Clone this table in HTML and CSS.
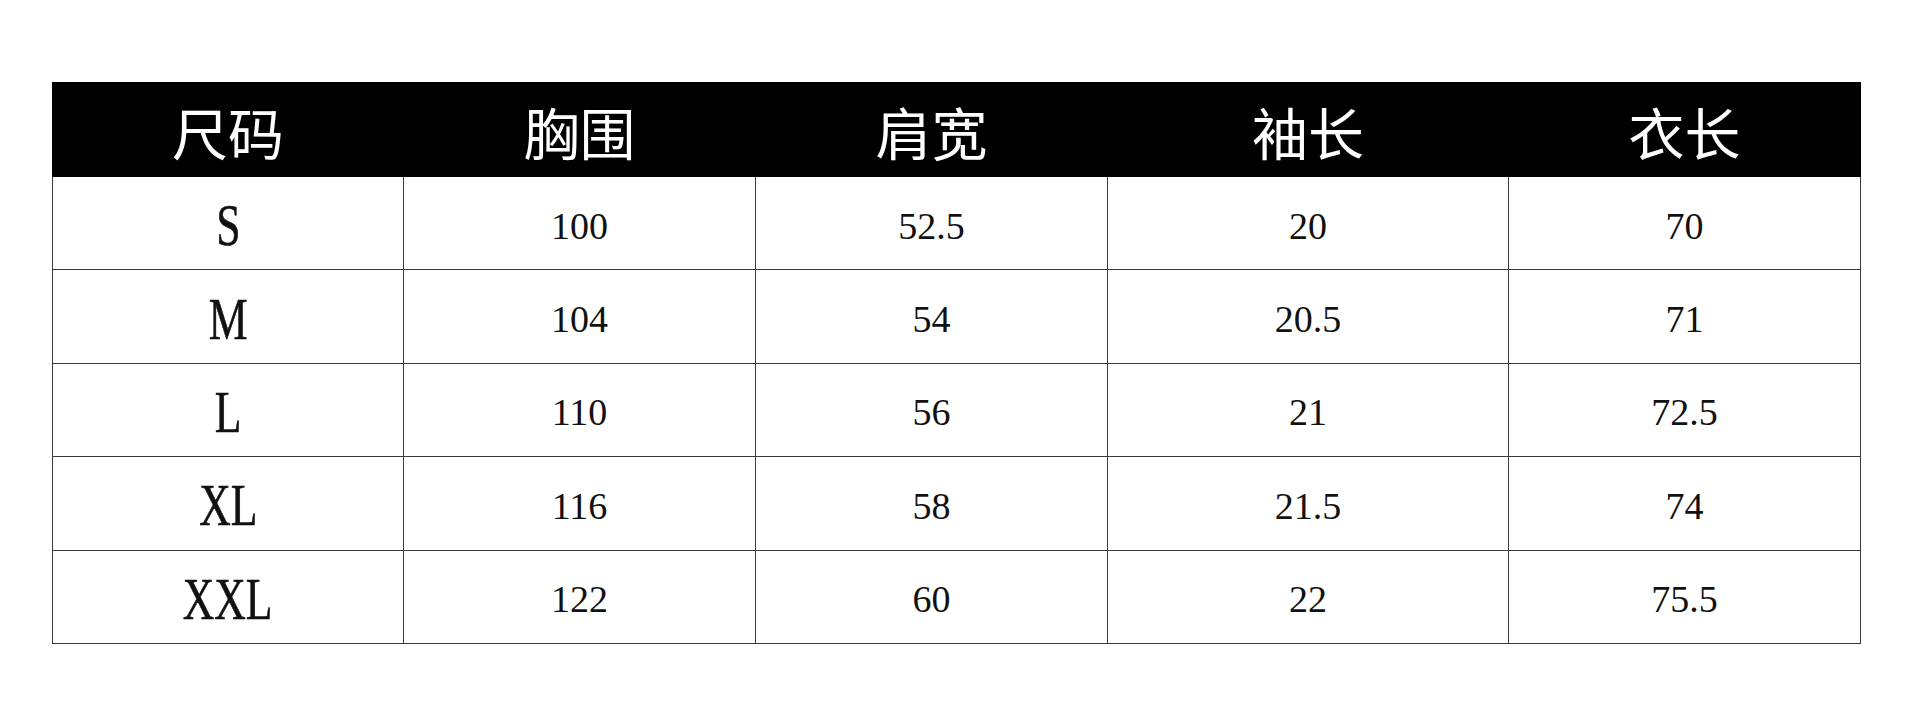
FILE: index.html
```html
<!DOCTYPE html>
<html lang="zh-CN">
<head>
<meta charset="utf-8">
<title>尺码表</title>
<link rel="stylesheet" href="styles.css">
</head>
<body>
<main class="page">
  <table class="size-table">
    <colgroup>
      <col class="c-size">
      <col class="c-std">
      <col class="c-std">
      <col class="c-wide">
      <col class="c-std">
    </colgroup>
    <thead>
      <tr class="head-row">
        <th>尺码</th><th>胸围</th><th>肩宽</th><th>袖长</th><th>衣长</th>
      </tr>
    </thead>
    <tbody>
      <tr><td class="size"><span>S</span></td><td>100</td><td>52.5</td><td>20</td><td>70</td></tr>
      <tr><td class="size"><span>M</span></td><td>104</td><td>54</td><td>20.5</td><td>71</td></tr>
      <tr><td class="size"><span>L</span></td><td>110</td><td>56</td><td>21</td><td>72.5</td></tr>
      <tr><td class="size"><span>XL</span></td><td>116</td><td>58</td><td>21.5</td><td>74</td></tr>
      <tr><td class="size"><span>XXL</span></td><td>122</td><td>60</td><td>22</td><td>75.5</td></tr>
    </tbody>
  </table>
</main>
</body>
</html>
```

FILE: styles.css
```css
html, body {
  margin: 0;
  padding: 0;
  background: #ffffff;
}

.page {
  padding: 82px 0 0 52px;
}

.size-table {
  width: 1808px;
  border-collapse: collapse;
  table-layout: fixed;
  font-family: "Liberation Serif", "Noto Sans CJK SC", serif;
  color: #111;
}

.c-size { width: 351px; }
.c-std { width: 352px; }
.c-wide { width: 401px; }

.size-table th,
.size-table td {
  box-sizing: border-box;
}

.head-row th {
  height: 94px;
  padding: 2px 0 0 0;
  background: #000;
  color: #fff;
  font-family: "Noto Sans CJK SC", "Noto Sans CJK TC", sans-serif;
  font-weight: 400;
  font-size: 56px;
  line-height: 1;
  text-align: center;
  vertical-align: middle;
  border: 1px solid #000;
}

.size-table td {
  height: 93.4px;
  padding: 5px 0 0 0;
  border: 1px solid #3a3a3a;
  text-align: center;
  vertical-align: middle;
  font-size: 38px;
  line-height: 1;
}

.size-table td.size span {
  display: inline-block;
  font-size: 59px;
  transform: scaleX(0.74);
  transform-origin: center;
  -webkit-text-stroke: 0.6px #111;
}
```
